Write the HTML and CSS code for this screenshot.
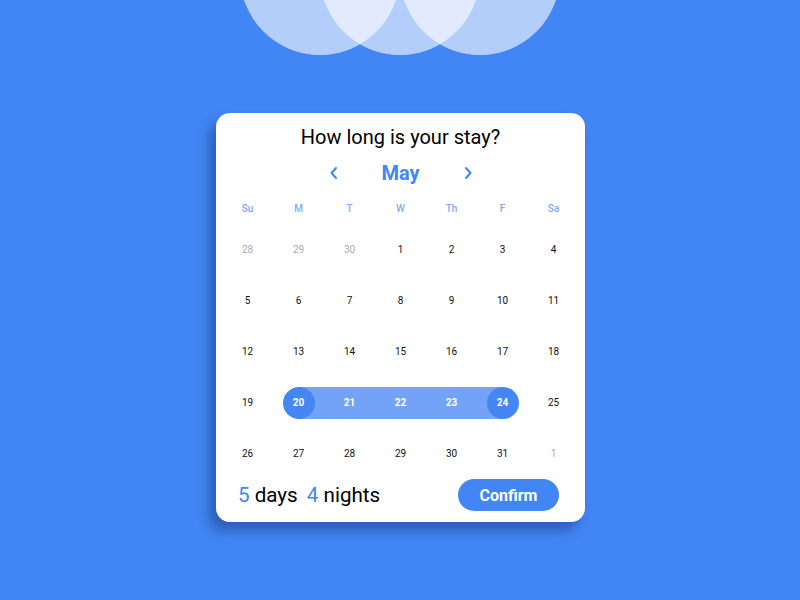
FILE: index.html
```html
<!DOCTYPE html>
<html>
<head>
<meta charset="utf-8">
<link rel="stylesheet" href="styles.css">
</head>
<body>
<div class="bubbles">
  <div class="bubble"></div>
  <div class="bubble"></div>
  <div class="bubble"></div>
</div>
<div class="card">
  <h1 class="title">How long is your stay?</h1>
  <div class="month-nav">
    <svg class="chev" width="10" height="14" viewBox="0 0 10 14"><path d="M7 2 L2.5 7 L7 12" fill="none" stroke="#4285f4" stroke-width="2" stroke-linecap="round" stroke-linejoin="round"/></svg>
    <span class="month">May</span>
    <svg class="chev" width="10" height="14" viewBox="0 0 10 14"><path d="M3 2 L7.5 7 L3 12" fill="none" stroke="#4285f4" stroke-width="2" stroke-linecap="round" stroke-linejoin="round"/></svg>
  </div>
  <div class="weekdays">
    <span>Su</span><span>M</span><span>T</span><span>W</span><span>Th</span><span>F</span><span>Sa</span>
  </div>
  <div class="days">
    <div class="day other"><span>28</span></div>
    <div class="day other"><span>29</span></div>
    <div class="day other"><span>30</span></div>
    <div class="day"><span>1</span></div>
    <div class="day"><span>2</span></div>
    <div class="day"><span>3</span></div>
    <div class="day"><span>4</span></div>
    <div class="day"><span>5</span></div>
    <div class="day"><span>6</span></div>
    <div class="day"><span>7</span></div>
    <div class="day"><span>8</span></div>
    <div class="day"><span>9</span></div>
    <div class="day"><span>10</span></div>
    <div class="day"><span>11</span></div>
    <div class="day"><span>12</span></div>
    <div class="day"><span>13</span></div>
    <div class="day"><span>14</span></div>
    <div class="day"><span>15</span></div>
    <div class="day"><span>16</span></div>
    <div class="day"><span>17</span></div>
    <div class="day"><span>18</span></div>
    <div class="day"><span>19</span></div>
    <div class="day range start"><span>20</span></div>
    <div class="day range mid"><span>21</span></div>
    <div class="day range mid"><span>22</span></div>
    <div class="day range mid"><span>23</span></div>
    <div class="day range end"><span>24</span></div>
    <div class="day"><span>25</span></div>
    <div class="day"><span>26</span></div>
    <div class="day"><span>27</span></div>
    <div class="day"><span>28</span></div>
    <div class="day"><span>29</span></div>
    <div class="day"><span>30</span></div>
    <div class="day"><span>31</span></div>
    <div class="day other"><span>1</span></div>
  </div>
  <div class="footer">
    <div class="summary"><span class="num">5</span> days <span class="num gap">4</span> nights</div>
    <button class="confirm">Confirm</button>
  </div>
</div>
</body>
</html>
```
FILE: styles.css
```css
html, body {
  margin: 0;
  padding: 0;
}
body {
  background: #4285f4;
  font-family: Roboto, "Noto Sans", sans-serif;
  height: 600px;
  overflow: hidden;
}
.bubbles {
  display: flex;
  justify-content: center;
  height: 55px;
}
.bubble {
  flex: none;
  width: 160px;
  height: 160px;
  margin-top: -105px;
  border-radius: 50%;
  background: rgba(255, 255, 255, 0.6);
}
.bubble + .bubble {
  margin-left: -80px;
}
.card {
  box-sizing: border-box;
  width: 369px;
  height: 409px;
  margin: 58px 0 0 216px;
  padding-top: 12px;
  background: #fff;
  border-radius: 14px;
  box-shadow: -7px 9px 12px rgba(20, 50, 110, 0.45);
}
.title {
  margin: 0;
  font-size: 20px;
  line-height: 24px;
  font-weight: 400;
  color: #000;
  text-align: center;
}
.month-nav {
  margin-top: 12px;
  height: 24px;
  display: flex;
  align-items: center;
  justify-content: center;
}
.chev {
  display: block;
}
.month {
  width: 124px;
  text-align: center;
  font-size: 20px;
  line-height: 24px;
  font-weight: 700;
  color: #4285f4;
}
.weekdays {
  margin: 13px 6px 0;
  height: 21px;
  display: grid;
  grid-template-columns: repeat(7, 51px);
  align-items: center;
  justify-items: center;
  font-size: 10px;
  font-weight: 500;
  color: #7eaaf7;
}
.days {
  margin: 5px 6px 0;
  display: grid;
  grid-template-columns: repeat(7, 51px);
  grid-auto-rows: 51px;
}
.day {
  display: flex;
  align-items: center;
  justify-content: center;
  font-size: 10px;
  font-weight: 400;
  color: #111;
}
.day span {
  display: flex;
  align-items: center;
  justify-content: center;
  width: 32px;
  height: 32px;
  border-radius: 50%;
}
.day.other {
  color: #aaa;
}
.day.range {
  color: #fff;
  font-weight: 700;
  background-repeat: no-repeat;
  background-position: center;
  background-size: 100% 32px;
}
.day.mid {
  background-image: linear-gradient(#72a3f6, #72a3f6);
}
.day.start {
  background-image: linear-gradient(to right, transparent 50%, #72a3f6 50%);
}
.day.end {
  background-image: linear-gradient(to right, #72a3f6 50%, transparent 50%);
}
.day.start span,
.day.end span {
  background: #4487f4;
}
.footer {
  margin-top: 0;
  height: 32px;
  padding: 0 26px 0 22px;
  display: flex;
  align-items: center;
  justify-content: space-between;
}
.summary {
  font-size: 20.6px;
  font-weight: 400;
  color: #000;
}
.num {
  color: #4285f4;
}
.gap {
  margin-left: 4px;
}
.confirm {
  width: 101px;
  height: 32px;
  border: none;
  border-radius: 16px;
  background: #4285f4;
  color: #fff;
  font-family: Roboto, "Noto Sans", sans-serif;
  font-size: 16px;
  font-weight: 700;
  padding: 0;
}
```
